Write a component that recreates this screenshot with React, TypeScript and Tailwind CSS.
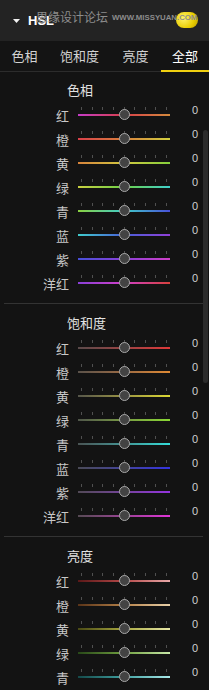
import React from 'react';

type Row = { label: string; track: string };
type Section = { title: string; pt: string; rows: Row[]; divider: boolean };

const sections: Section[] = [
  {
    title: '色相',
    pt: 'pt-[8px]',
    divider: true,
    rows: [
      { label: '红', track: 'bg-[linear-gradient(to_right,#c63cc8,#d8404a,#d48a3c)]' },
      { label: '橙', track: 'bg-[linear-gradient(to_right,#d8404a,#d8803c,#d2d040)]' },
      { label: '黄', track: 'bg-[linear-gradient(to_right,#d8843c,#d2c840,#86d03c)]' },
      { label: '绿', track: 'bg-[linear-gradient(to_right,#cad040,#6ed048,#40d0cc)]' },
      { label: '青', track: 'bg-[linear-gradient(to_right,#8ad040,#40ccc8,#4850d8)]' },
      { label: '蓝', track: 'bg-[linear-gradient(to_right,#40cccc,#4860d8,#9040d8)]' },
      { label: '紫', track: 'bg-[linear-gradient(to_right,#4850d8,#8a40d8,#d040c8)]' },
      { label: '洋红', track: 'bg-[linear-gradient(to_right,#8a40d8,#d040c8,#d8403c)]' },
    ],
  },
  {
    title: '饱和度',
    pt: 'pt-[9px]',
    divider: true,
    rows: [
      { label: '红', track: 'bg-[linear-gradient(to_right,#5a4a4a,#9a4444,#e03a3a)]' },
      { label: '橙', track: 'bg-[linear-gradient(to_right,#5a524a,#9a6a44,#e08a34)]' },
      { label: '黄', track: 'bg-[linear-gradient(to_right,#56564a,#9a9444,#dcd834)]' },
      { label: '绿', track: 'bg-[linear-gradient(to_right,#50564a,#789a44,#8ad834)]' },
      { label: '青', track: 'bg-[linear-gradient(to_right,#4a5454,#449494,#34dcd8)]' },
      { label: '蓝', track: 'bg-[linear-gradient(to_right,#4a4a56,#44449a,#3434e0)]' },
      { label: '紫', track: 'bg-[linear-gradient(to_right,#524a56,#74449a,#9434e0)]' },
      { label: '洋红', track: 'bg-[linear-gradient(to_right,#564a54,#9a4494,#e034d8)]' },
    ],
  },
  {
    title: '亮度',
    pt: 'pt-[9px]',
    divider: false,
    rows: [
      { label: '红', track: 'bg-[linear-gradient(to_right,#5a1818,#b44848,#e8a8a8)]' },
      { label: '橙', track: 'bg-[linear-gradient(to_right,#5a3418,#b48048,#e8d0a8)]' },
      { label: '黄', track: 'bg-[linear-gradient(to_right,#4a4a14,#a8a840,#e8e8a8)]' },
      { label: '绿', track: 'bg-[linear-gradient(to_right,#284818,#70a040,#c8e8a8)]' },
      { label: '青', track: 'bg-[linear-gradient(to_right,#144a4a,#40a0a0,#a8e8e8)]' },
    ],
  },
];

const tabs = [
  { label: '色相', w: 'w-[49px]' },
  { label: '饱和度', w: 'w-[61px]' },
  { label: '亮度', w: 'w-[51px]' },
  { label: '全部', w: 'w-[48px]', active: true },
];

function Slider({ track }: { track: string }) {
  return (
    <div className="relative ml-[8px] flex h-[24px] w-[92px] flex-col pt-[4px]">
      <div className="flex h-[3px] justify-between px-[3px]">
        {Array.from({ length: 9 }).map((_, i) => (
          <span key={i} className="w-px bg-[#505050]" />
        ))}
      </div>
      <div className={`mt-[4px] h-[2px] ${track}`} />
      {/* thumb sits over the track */}
      <div className="absolute left-[41px] top-[6px] size-[11px] rounded-full border border-[#a8a8a8] bg-[#434343]" />
    </div>
  );
}

export default function App() {
  return (
    <div className="relative h-[690px] w-[209px] overflow-hidden bg-[#131313] font-['Noto_Sans_CJK_SC',sans-serif]">
      <header className="relative flex h-[41px] items-center bg-[#232323] pl-[13px]">
        <svg width="7" height="4" viewBox="0 0 7 4" aria-hidden="true">
          <path d="M0 0h7L3.5 4z" fill="#f2f2f2" />
        </svg>
        <span className="ml-[8px] font-['Liberation_Sans',sans-serif] text-[13px] font-bold text-white">
          HSL
        </span>
        {/* watermark */}
        <span className="absolute left-[176px] top-[12px] h-[16px] w-[22px] rounded-full bg-[radial-gradient(circle_at_35%_40%,#fff36a,#e8cc00_60%,#b89a00)]" />
        <span className="absolute left-[36px] top-[9px] text-[12px] leading-[16px] text-[#8c8c8c]">
          思缘设计论坛
        </span>
        <span className="absolute left-[112px] top-[13px] font-['Liberation_Sans',sans-serif] text-[7.8px] font-bold leading-[10px] text-[#8c8c8c]">
          WWW.MISSYUAN.COM
        </span>
      </header>

      <nav className="flex h-[31px] border-b border-[#2c2c2c] bg-[#141414]">
        {tabs.map((t) => (
          <div
            key={t.label}
            className={`relative flex items-center justify-center text-[13px] ${t.w} ${
              t.active ? 'text-white' : 'text-[#d2d2d2]'
            }`}
          >
            {t.label}
            {t.active && <span className="absolute inset-x-0 -bottom-px h-[2px] bg-[#f0d010]" />}
          </div>
        ))}
      </nav>

      {sections.map((s) => (
        <section key={s.title} className={s.pt}>
          <h3 className="h-[20px] pl-[67px] text-[13px] leading-[20px] text-[#e2e2e2]">{s.title}</h3>
          <div className="mt-[3px] pb-[8px]">
            {s.rows.map((r) => (
              <div key={r.label} className="flex h-[24px] items-center">
                <span className="w-[70px] pr-px text-right text-[13px] leading-none text-[#c8c8c8]">
                  {r.label}
                </span>
                <Slider track={r.track} />
                <span className="ml-[22px] pb-[10px] font-['Liberation_Sans',sans-serif] text-[11px] leading-none text-[#cfcfcf]">
                  0
                </span>
              </div>
            ))}
          </div>
          {s.divider && <div className="ml-[4px] mr-[6px] h-px bg-[#333333]" />}
        </section>
      ))}

      {/* scrollbar thumb */}
      <div className="absolute right-[1px] top-[130px] h-[253px] w-[5px] rounded-full bg-[#2c2c2c]" />
    </div>
  );
}
